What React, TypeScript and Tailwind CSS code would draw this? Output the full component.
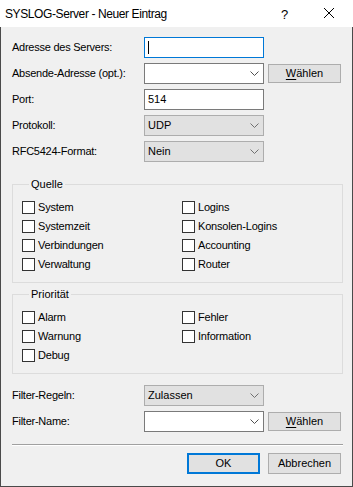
import { ReactNode } from 'react'

const Chevron = ({ color = '#505050' }: { color?: string }) => (
	<svg width="9" height="5" viewBox="0 0 9 5" className="shrink-0">
		<path d="M0.5 0.5 L4.5 4.5 L8.5 0.5" fill="none" stroke={color} strokeWidth="1" />
	</svg>
)

const Row = ({ label, children }: { label: string; children: ReactNode }) => (
	<div className="flex items-center h-[21px]">
		<div className="w-[132px] tracking-[-0.25px]">{label}</div>
		{children}
	</div>
)

const TextBox = ({ value, focused }: { value?: string; focused?: boolean }) => (
	<div
		className={`w-[120px] h-[21px] bg-white border flex items-center pl-[3px] ${
			focused ? 'border-[#0078d7]' : 'border-[#7a7a7a]'
		}`}
	>
		{focused && <div className="w-px h-[13px] bg-black" />}
		{value}
	</div>
)

const EditCombo = () => (
	<div className="w-[120px] h-[21px] bg-white border border-[#7a7a7a] flex items-center justify-end pr-[4px]">
		<Chevron />
	</div>
)

const DropDown = ({ value }: { value: string }) => (
	<div className="w-[120px] h-[21px] bg-[#e1e1e1] border border-[#adadad] flex items-center justify-between pl-[3px] pr-[4px]">
		<span>{value}</span>
		<Chevron color="#707070" />
	</div>
)

const PickButton = () => (
	<button className="ml-[4px] w-[73px] h-[19px] bg-[#e1e1e1] border border-[#adadad] text-center leading-[17px]">
		<span className="underline underline-offset-[2px]">W</span>ählen
	</button>
)

const Check = ({ label }: { label: string }) => (
	<div className="flex items-center h-[13px]">
		<div className="w-[13px] h-[13px] bg-white border border-[#333333] shrink-0" />
		<span className="ml-[3px] leading-[13px] tracking-[-0.2px]">{label}</span>
	</div>
)

const Group = ({ title, items }: { title: string; items: string[] }) => (
	<fieldset className="border border-[#dcdcdc] pl-[9px] pt-[10px] pb-[11px]">
		<legend className="ml-[7px] px-[2px] leading-[13px]">{title}</legend>
		<div className="grid grid-cols-[160px_1fr] gap-y-[6px]">
			{items.map((item, i) => (
				<Check key={i} label={item} />
			))}
		</div>
	</fieldset>
)

const App = () => {
	return (
		<div className="w-[353px] h-[487px] flex flex-col font-['Liberation_Sans',Arial,sans-serif] text-[11px] text-black bg-white">
			<div className="h-[27px] shrink-0 bg-white flex items-center relative">
				<span className="ml-[5px] text-[12px] tracking-[-0.4px]">SYSLOG-Server - Neuer Eintrag</span>
				<span className="absolute left-[281px] top-[5px] text-[13px]">?</span>
				<svg width="10" height="10" viewBox="0 0 10 10" className="absolute left-[324px] top-[8px]">
					<path d="M0 0 L10 10 M10 0 L0 10" stroke="#000" strokeWidth="1" />
				</svg>
			</div>

			<div className="flex-1 bg-[#f0f0f0] border-x border-b border-[#4a4a4a] pl-[11px] pr-[9px] pt-[10px] flex flex-col">
				<div className="flex flex-col gap-[5px]">
					<Row label="Adresse des Servers:">
						<TextBox focused />
					</Row>
					<Row label="Absende-Adresse (opt.):">
						<EditCombo />
						<PickButton />
					</Row>
					<Row label="Port:">
						<TextBox value="514" />
					</Row>
					<Row label="Protokoll:">
						<DropDown value="UDP" />
					</Row>
					<Row label="RFC5424-Format:">
						<DropDown value="Nein" />
					</Row>
				</div>

				<div className="mt-[16px]">
					<Group
						title="Quelle"
						items={['System', 'Logins', 'Systemzeit', 'Konsolen-Logins', 'Verbindungen', 'Accounting', 'Verwaltung', 'Router']}
					/>
				</div>
				<div className="mt-[5px]">
					<Group title="Priorität" items={['Alarm', 'Fehler', 'Warnung', 'Information', 'Debug']} />
				</div>

				<div className="mt-[11px] flex flex-col gap-[5px]">
					<Row label="Filter-Regeln:">
						<DropDown value="Zulassen" />
					</Row>
					<Row label="Filter-Name:">
						<EditCombo />
						<PickButton />
					</Row>
				</div>

				<div className="mt-[12px] border-t border-[#a0a0a0] border-b border-b-white" />

				<div className="mt-[7px] flex justify-end gap-[8px] mr-[2px]">
					<button className="w-[73px] h-[21px] bg-[#e1e1e1] border-2 border-[#0078d7]">OK</button>
					<button className="w-[73px] h-[21px] bg-[#e1e1e1] border border-[#adadad]">Abbrechen</button>
				</div>
			</div>
		</div>
	)
}

export default App
